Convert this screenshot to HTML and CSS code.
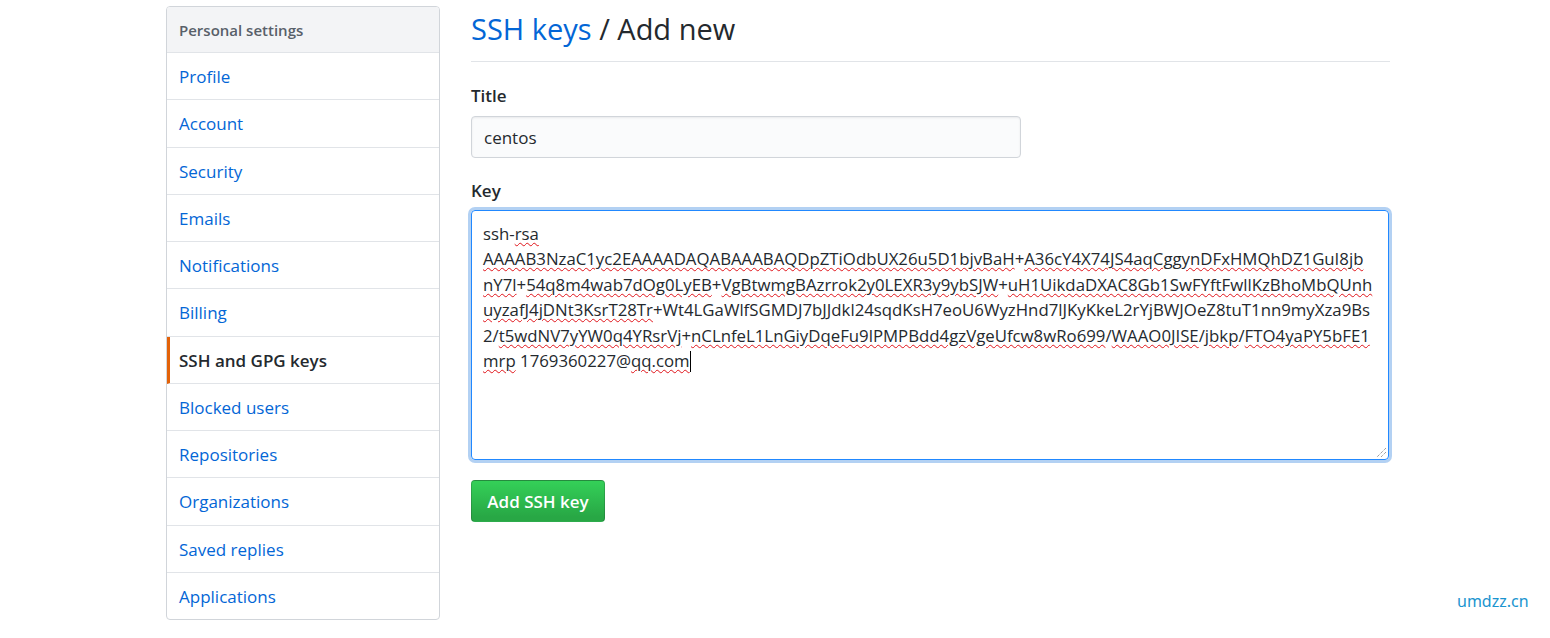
FILE: index.html
```html
<!DOCTYPE html>
<html lang="en">
<head>
<meta charset="UTF-8">
<meta name="viewport" content="width=device-width, initial-scale=1.0">
<title>Add new SSH key</title>
<link rel="stylesheet" href="styles.css">
</head>
<body>
<div class="page">
    <nav class="menu">
        <div class="menu-heading">Personal settings</div>
        <a class="menu-item" href="#">Profile</a>
        <a class="menu-item" href="#">Account</a>
        <a class="menu-item" href="#">Security</a>
        <a class="menu-item" href="#">Emails</a>
        <a class="menu-item" href="#">Notifications</a>
        <a class="menu-item" href="#">Billing</a>
        <a class="menu-item selected" href="#">SSH and GPG keys</a>
        <a class="menu-item" href="#">Blocked users</a>
        <a class="menu-item" href="#">Repositories</a>
        <a class="menu-item" href="#">Organizations</a>
        <a class="menu-item" href="#">Saved replies</a>
        <a class="menu-item" href="#">Applications</a>
    </nav>

    <main class="content">
        <div class="subhead">
            <h2 class="subhead-heading"><a href="#">SSH keys</a> / Add new</h2>
        </div>
        <form class="key-form">
            <dl class="form-group">
                <dt><label for="title">Title</label></dt>
                <dd><input id="title" class="form-control" type="text" value="centos"></dd>
            </dl>
            <dl class="form-group">
                <dt><label>Key</label></dt>
                <dd>
                    <div class="key-box">
<div class="key-text">ssh-<span class="typo">rsa</span>
<span class="typo">AAAAB3NzaC1yc2EAAAADAQABAAABAQDpZTiOdbUX26u5D1bjvBaH</span>+<span class="typo">A36cY4X74JS4aqCggynDFxHMQhDZ1GuI8jb</span>
<span class="typo">nY7l</span>+<span class="typo">54q8m4wab7dOg0LyEB</span>+<span class="typo">VgBtwmgBAzrrok2y0LEXR3y9ybSJW</span>+<span class="typo">uH1UikdaDXAC8Gb1SwFYftFwllKzBhoMbQUnh</span>
<span class="typo">uyzafJ4jDNt3KsrT28Tr</span>+Wt4LGaWlfSGMDJ7bJJdkl24sqdKsH7eoU6WyzHnd7lJKyKkeL2rYjBWJOeZ8tuT1nn9myXza9Bs
2/<span class="typo">t5wdNV7yYW0q4YRsrVj</span>+<span class="typo">nCLnfeL1LnGiyDqeFu9lPMPBdd4gzVgeUfcw8wRo699</span>/<span class="typo">WAAO0JISE</span>/<span class="typo">jbkp</span>/<span class="typo">FTO4yaPY5bFE1</span>
<span class="typo">mrp</span> 1769360227@<span class="typo">qq.com</span><span class="caret"></span></div>
                        <svg class="grip" width="11" height="11" viewBox="0 0 11 11">
                            <path d="M10 1 L1 10 M10 5 L5 10" stroke="#777" stroke-width="1" stroke-dasharray="1 1"/>
                        </svg>
                    </div>
                </dd>
            </dl>
            <button type="button" class="btn-primary">Add SSH key</button>
        </form>
    </main>
</div>
<div class="watermark">umdzz.cn</div>
</body>
</html>
```

FILE: styles.css
```css
body {
    margin: 0;
    font-family: "Open Sans", "Noto Sans", Arial, sans-serif;
    font-size: 17px;
    color: #24292e;
    background: #fff;
}
a {
    text-decoration: none;
    color: #0366d6;
}
.page {
    display: flex;
    padding-left: 166px;
    gap: 31px;
}

/* left menu */
.menu {
    width: 274px;
    box-sizing: border-box;
    margin-top: 6px;
    border: 1px solid #d1d5da;
    border-radius: 4px;
    display: flex;
    flex-direction: column;
    overflow: hidden;
}
.menu-heading {
    height: 45px;
    line-height: 47px;
    padding-left: 12px;
    background: #f3f4f6;
    border-bottom: 1px solid #e1e4e8;
    font-size: 15px;
    font-weight: 600;
    color: #586069;
}
.menu-item {
    height: 46.25px;
    line-height: 48px;
    padding-left: 12px;
    border-bottom: 1px solid #e1e4e8;
    color: #0366d6;
    overflow: hidden;
}
.menu-item:last-child {
    border-bottom: none;
}
.menu-item.selected {
    padding-left: 9px;
    border-left: 3px solid #e36209;
    color: #24292e;
    font-weight: 600;
}

/* main column */
.content {
    width: 919px;
}
.subhead {
    height: 62px;
    border-bottom: 1px solid #e1e4e8;
    box-sizing: border-box;
    display: flex;
    align-items: center;
}
.subhead-heading {
    margin: 0;
    font-size: 29px;
    font-weight: 400;
    line-height: 1;
    padding-bottom: 4px;
}
.form-group {
    margin: 0;
}
.form-group dt {
    font-weight: 600;
    height: 24px;
    line-height: 24px;
}
.form-group dd {
    margin: 0;
}
.key-form {
    padding-top: 22px;
}
.form-group + .form-group {
    margin-top: 21px;
}
.form-control {
    display: block;
    margin-top: 8px;
    width: 550px;
    height: 42px;
    box-sizing: border-box;
    padding: 0 12px;
    font-family: inherit;
    font-size: 17px;
    color: #24292e;
    background: #fafbfc;
    border: 1px solid #d1d5da;
    border-radius: 4px;
    box-shadow: inset 0 1px 2px rgba(27,31,35,.075);
}
.key-box {
    position: relative;
    margin-top: 7px;
    width: 918px;
    height: 250px;
    box-sizing: border-box;
    padding: 10px 11px;
    border: 1px solid #2188ff;
    border-radius: 4px;
    box-shadow: 0 0 0 3px rgba(3,102,214,.3);
    overflow: hidden;
}
.key-text {
    white-space: pre;
    font-size: 16.8px;
    line-height: 25.4px;
    color: #24292e;
}
.typo {
    text-decoration: underline wavy #e0141a;
    text-decoration-thickness: 1px;
    text-underline-offset: 2px;
}
.caret {
    display: inline-block;
    width: 1px;
    height: 21px;
    background: #000;
    vertical-align: -5px;
}
.grip {
    position: absolute;
    right: 1px;
    bottom: 1px;
}
.btn-primary {
    margin-top: 20px;
    width: 134px;
    height: 42px;
    font-family: inherit;
    font-size: 17px;
    font-weight: 600;
    color: #fff;
    background-image: linear-gradient(-180deg, #34d058 0%, #28a745 90%);
    border: 1px solid rgba(27,31,35,.2);
    border-radius: 4px;
    cursor: pointer;
}
.watermark {
    position: absolute;
    left: 1457px;
    top: 590px;
    font-family: "Noto Sans", sans-serif;
    font-size: 16px;
    color: #1a94cf;
}
```
